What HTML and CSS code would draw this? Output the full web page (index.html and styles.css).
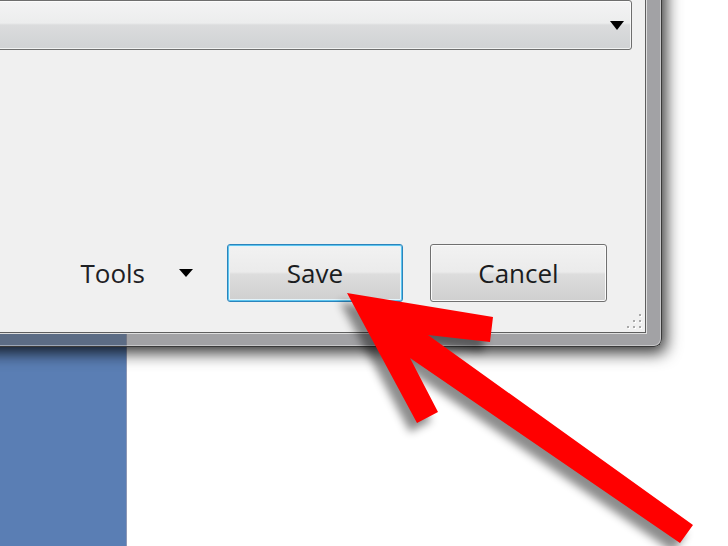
FILE: index.html
```html
<!DOCTYPE html>
<html>
<head>
<meta charset="utf-8">
<link rel="stylesheet" href="styles.css">
</head>
<body>
<div class="desktop">
  <div class="bg-window"></div>
  <div class="dialog">
    <div class="client">
      <div class="combo"><span class="combo-arrow"></span></div>
      <div class="footer">
        <div class="tools"><span>Tools</span><span class="caret"></span></div>
        <button class="btn btn-default">Save</button>
        <button class="btn">Cancel</button>
      </div>
      <svg class="grip" width="20" height="20" viewBox="0 0 20 20">
        <g fill="#ffffff">
          <rect x="17" y="6" width="2" height="2"/>
          <rect x="11" y="12" width="2" height="2"/><rect x="17" y="12" width="2" height="2"/>
          <rect x="5" y="18" width="2" height="2"/><rect x="11" y="18" width="2" height="2"/><rect x="17" y="18" width="2" height="2"/>
        </g>
        <g fill="#a9a9a9">
          <rect x="16" y="5" width="2" height="2"/>
          <rect x="10" y="11" width="2" height="2"/><rect x="16" y="11" width="2" height="2"/>
          <rect x="4" y="17" width="2" height="2"/><rect x="10" y="17" width="2" height="2"/><rect x="16" y="17" width="2" height="2"/>
        </g>
      </svg>
    </div>
  </div>
  <svg class="arrow" width="728" height="546" viewBox="0 0 728 546">
    <polygon points="347,293 493,317 490,342 428,335 693,525 680,543 410,358 438,412 417,423" fill="#ff0000"/>
  </svg>
</div>
</body>
</html>
```
FILE: styles.css
```css
html, body {
  margin: 0;
  padding: 0;
  background: #ffffff;
}

body {
  font-family: "Open Sans", "Noto Sans", "DejaVu Sans", sans-serif;
}

.desktop {
  position: relative;
  width: 728px;
  height: 546px;
  overflow: hidden;
  background: #ffffff;
}

.bg-window {
  position: absolute;
  left: 0;
  top: 0;
  width: 126px;
  height: 546px;
  background: #5a7eb4;
  border-right: 1px solid #8d98b6;
}

.dialog {
  position: absolute;
  left: -30px;
  top: -40px;
  width: 692px;
  height: 387px;
  box-sizing: border-box;
  display: flex;
  border: 1px solid #3a3a3a;
  border-top: none;
  border-radius: 0 0 8px 8px;
  background: rgba(95, 95, 100, 0.58);
  padding: 0 15px 13px 15px;
  box-shadow: 4px 6px 16px rgba(0, 0, 0, 0.8), inset 0 0 0 1px rgba(255, 255, 255, 0.4);
}

.client {
  position: relative;
  flex: 1;
  display: flex;
  flex-direction: column;
  background: #f0f0f0;
  border: 1px solid #5e5e5e;
  box-shadow: 0 0 0 1px #dedede;
}

.combo {
  height: 50px;
  box-sizing: border-box;
  margin: 39px 13px 0 0;
  display: flex;
  justify-content: flex-end;
  align-items: center;
  padding-right: 7px;
  border: 1px solid #6e6e6e;
  border-radius: 3px;
  background: linear-gradient(#f3f3f4 0%, #eceded 46%, #dbdcdd 50%, #d0d2d4 100%);
  box-shadow: inset 0 0 0 1px rgba(255, 255, 255, 0.7);
}

.combo-arrow {
  width: 0;
  height: 0;
  border-left: 7.5px solid transparent;
  border-right: 7.5px solid transparent;
  border-top: 9px solid #000000;
}

.footer {
  margin-top: auto;
  display: flex;
  justify-content: flex-end;
  align-items: center;
  padding: 0 38px 30px 0;
}

.tools {
  display: flex;
  align-items: center;
  font-size: 26px;
  color: #1e2024;
  margin-right: 34px;
}

.caret {
  width: 0;
  height: 0;
  margin-left: 34px;
  border-left: 7px solid transparent;
  border-right: 7px solid transparent;
  border-top: 8px solid #000000;
}

.btn {
  width: 177px;
  height: 58px;
  box-sizing: border-box;
  margin: 0;
  padding: 0;
  font-family: inherit;
  font-size: 26px;
  color: #1a1c20;
  border: 1px solid #707070;
  border-radius: 3px;
  background: linear-gradient(#f2f2f2 0%, #ebebeb 48%, #dddddd 52%, #cfcfcf 100%);
  box-shadow: inset 0 0 0 1px #fbfbfb;
}

.btn + .btn {
  margin-left: 27px;
}

.btn-default {
  width: 176px;
  border-color: #2c84bc;
  box-shadow: inset 0 0 0 1px #5cc4ee, inset 0 0 0 2px #e4f4fb;
}

.grip {
  position: absolute;
  right: 2px;
  bottom: 3px;
}

.arrow {
  position: absolute;
  left: 0;
  top: 0;
  pointer-events: none;
  filter: drop-shadow(-7px 9px 4px rgba(0, 0, 0, 0.45));
}
```
